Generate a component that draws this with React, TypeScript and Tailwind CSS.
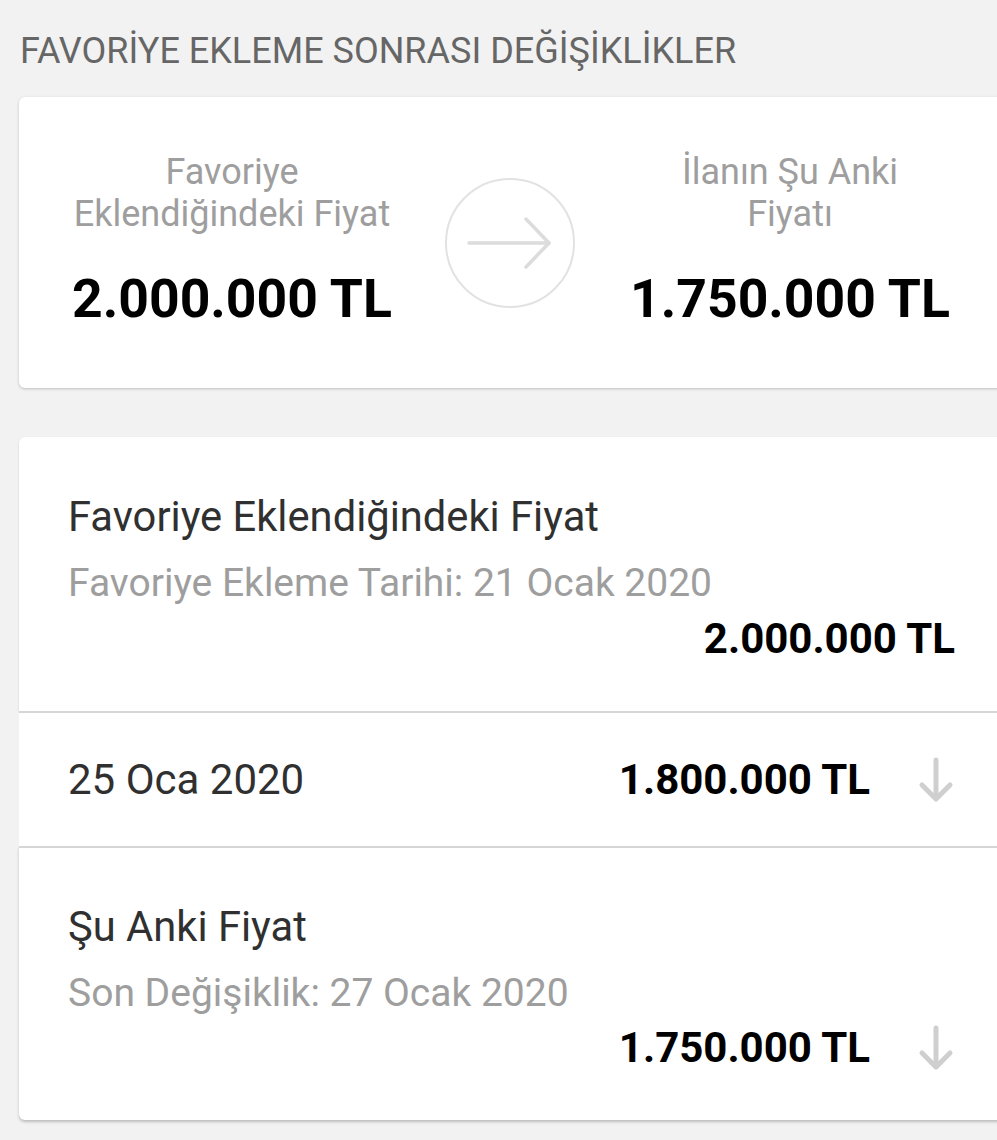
import React from 'react';

const ArrowDown = () => (
  <svg width="38" height="46" viewBox="0 0 38 46" fill="none" stroke="#cfcfcf" strokeWidth="5" strokeLinecap="round" strokeLinejoin="round">
    <path d="M19 3 V41" />
    <path d="M5 28 L19 42 L33 28" />
  </svg>
);

const App = () => {
  return (
    <div className="min-h-screen w-[997px] overflow-hidden bg-[#f2f2f2] pb-[40px] font-['Roboto',sans-serif]">
      {/* Title */}
      <div className="pl-[20px] pt-[31px] text-[36px] leading-[40px] text-[#666666]">
        FAVORİYE EKLEME SONRASI DEĞİŞİKLİKLER
      </div>

      {/* Comparison card */}
      <div className="ml-[19px] mt-[26px] flex h-[291px] w-[990px] items-start rounded-[6px] bg-white shadow-[0_1px_3px_rgba(0,0,0,0.22)]">
        <div className="w-[426px] pt-[54px] text-center">
          <div className="text-[36px] leading-[42px] text-[#9e9e9e]">
            Favoriye
            <br />
            Eklendiğindeki Fiyat
          </div>
          <div className="mt-[37px] text-[53.5px] font-bold leading-[54px] text-black">2.000.000 TL</div>
        </div>
        <div className="flex h-[130px] w-[130px] items-center justify-center self-center rounded-full border-2 border-[#e2e2e2]">
          <svg width="90" height="60" viewBox="0 0 90 60" fill="none" stroke="#dcdcdc" strokeWidth="3.5" strokeLinecap="round" strokeLinejoin="round">
            <path d="M4 30 H84" />
            <path d="M61 6 L84 30 L61 54" />
          </svg>
        </div>
        <div className="w-[430px] pt-[54px] text-center">
          <div className="text-[36px] leading-[42px] text-[#9e9e9e]">
            İlanın Şu Anki
            <br />
            Fiyatı
          </div>
          <div className="mt-[37px] text-[53.5px] font-bold leading-[54px] text-black">1.750.000 TL</div>
        </div>
      </div>

      {/* History list */}
      <div className="ml-[19px] mt-[49px] w-[990px]">
        <div className="h-[274px] rounded-t-[6px] bg-white pl-[49px] pr-[54px] pt-[55px] shadow-[0_1px_2px_rgba(0,0,0,0.18)]">
          <div className="text-[41.7px] leading-[50px] text-[#303030]">Favoriye Eklendiğindeki Fiyat</div>
          <div className="mt-[17px] text-[39px] leading-[48px] text-[#9e9e9e]">Favoriye Ekleme Tarihi: 21 Ocak 2020</div>
          <div className="mt-[7px] text-right text-[42px] font-bold leading-[50px] text-black">2.000.000 TL</div>
        </div>
        <div className="flex h-[135px] items-center border-t-2 border-[#d6d6d6] bg-white pl-[49px] pr-[54px]">
          <div className="flex-1 text-[42px] leading-[50px] text-[#303030]">25 Oca 2020</div>
          <div className="text-[42px] font-bold leading-[50px] text-black">1.800.000 TL</div>
          <div className="ml-[47px] flex">
            <ArrowDown />
          </div>
        </div>
        <div className="h-[274px] rounded-b-[6px] border-t-2 border-[#d6d6d6] bg-white pl-[49px] pr-[54px] pt-[54px] shadow-[0_2px_3px_rgba(0,0,0,0.22)]">
          <div className="text-[41.7px] leading-[50px] text-[#303030]">Şu Anki Fiyat</div>
          <div className="mt-[17px] text-[39px] leading-[48px] text-[#9e9e9e]">Son Değişiklik: 27 Ocak 2020</div>
          <div className="mt-[6px] flex items-center justify-end">
            <div className="text-[42px] font-bold leading-[50px] text-black">1.750.000 TL</div>
            <div className="ml-[47px] flex">
              <ArrowDown />
            </div>
          </div>
        </div>
      </div>
    </div>
  );
};

export default App;
